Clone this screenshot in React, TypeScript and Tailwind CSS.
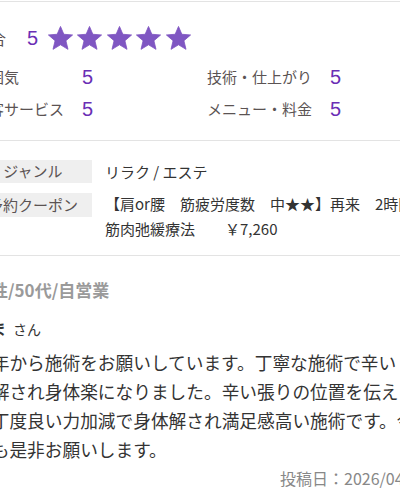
import React from "react";

const jp = { fontFamily: '"Noto Sans CJK JP", "Noto Sans", sans-serif' };
const num = { fontFamily: '"Liberation Sans", Arial, sans-serif' };

function Star() {
  return (
    <svg width="25" height="24" viewBox="0 0 24 23" className="shrink-0">
      <polygon
        points="12,0.4 15.2,7.9 23.6,8.6 17.2,14.1 19.2,22.4 12,18 4.8,22.4 6.8,14.1 0.4,8.6 8.8,7.9"
        fill="#7f56c2"
        strokeLinejoin="round"
        stroke="#7f56c2"
        strokeWidth="0.8"
      />
    </svg>
  );
}

const ratings = [
  { label: "雰囲気", score: 5, right: "技術・仕上がり", rightScore: 5 },
  { label: "接客サービス", score: 5, right: "メニュー・料金", rightScore: 5 },
];

export default function App() {
  return (
    <div className="w-[400px] h-[500px] overflow-hidden bg-white" style={jp}>
      <div className="-ml-[26px] w-[452px]">
        {/* ratings */}
        <div className="mt-[1px] border-t border-[#e3e3e3] pt-[22px] pb-[17px] border-b">
          <div className="flex h-[28px] items-center">
            <span className="w-[53px] text-[16px] text-[#5b5353]">総合</span>
            <span className="w-[21px] text-[20px] text-[#6a2fb5]" style={num}>
              5
            </span>
            <div className="flex gap-[4.4px]">
              {[0, 1, 2, 3, 4].map((i) => (
                <Star key={i} />
              ))}
            </div>
          </div>
          <div className="mt-[11px] grid grid-cols-[233px_1fr] gap-y-[4px]">
            {ratings.map((r) => (
              <React.Fragment key={r.label}>
                <div className="flex h-[28px] items-center">
                  <span className="w-[108px] text-[15px] text-[#5b5353]">{r.label}</span>
                  <span className="text-[20px] text-[#6a2fb5]" style={num}>
                    {r.score}
                  </span>
                </div>
                <div className="flex h-[28px] items-center">
                  <span className="w-[123px] text-[15px] text-[#5b5353]">{r.right}</span>
                  <span className="text-[20px] text-[#6a2fb5]" style={num}>
                    {r.rightScore}
                  </span>
                </div>
              </React.Fragment>
            ))}
          </div>
        </div>

        {/* genre / coupon */}
        <div className="border-b border-[#e3e3e3] pt-[19px] pb-[14px]">
          <div className="flex h-[23px] items-center">
            <div className="flex h-[23px] w-[118px] items-center justify-center bg-[#efefef] text-[15px] text-[#5b5353]">
              ジャンル
            </div>
            <div className="ml-[13px] text-[15px] leading-[23px] text-[#333]">リラク / エステ</div>
          </div>
          <div className="mt-[8px] flex items-start">
            <div className="mt-[2px] flex h-[24px] w-[118px] shrink-0 items-center justify-center bg-[#efefef] text-[15px] text-[#5b5353]">
              予約クーポン
            </div>
            <div className="ml-[13px] text-[15px] leading-[25px] text-[#333]">
              <div className="whitespace-nowrap">【肩or腰　筋疲労度数　中★★】再来　2時間</div>
              <div className="whitespace-nowrap">筋肉弛緩療法　　￥7,260</div>
            </div>
          </div>
        </div>

        {/* review */}
        <div className="pt-[22px]">
          <div className="text-[17px] font-bold leading-[24px] text-[#9a9a9a]">女性/50代/自営業</div>
          <div className="mt-[14px] flex items-baseline leading-[24px] text-[#333]">
            <span className="text-[16px] font-bold">しま</span>
            <span className="ml-[7px] text-[14px]">さん</span>
          </div>
          <div className="mt-[7px] text-[17.7px] leading-[29px] text-[#333]">
            <div className="whitespace-nowrap">去年から施術をお願いしています。丁寧な施術で辛い</div>
            <div className="whitespace-nowrap">が解され身体楽になりました。辛い張りの位置を伝え</div>
            <div className="whitespace-nowrap">と丁度良い力加減で身体解され満足感高い施術です。今</div>
            <div className="whitespace-nowrap">後も是非お願いします。</div>
          </div>
          <div className="mt-[2px] whitespace-nowrap pl-[306px] text-[16px] leading-[24px] text-[#888]">
            投稿日：2026/04/01
          </div>
        </div>
      </div>
    </div>
  );
}
